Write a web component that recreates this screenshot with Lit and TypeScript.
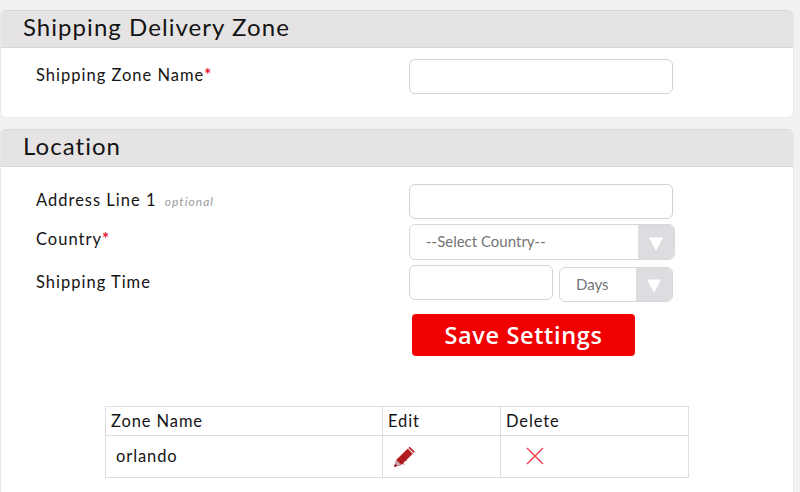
import { LitElement, html, css } from "lit";
import { customElement } from "lit/decorators.js";

@customElement("app-root")
export class AppRoot extends LitElement {
  static styles = css`
    :host {
      display: block;
      height: 492px;
      overflow: hidden;
      background: #f1f1f1;
      font-family: "Lato", "Open Sans", sans-serif;
      color: #141414;
    }
    .page { padding: 10px 6px 0 0; display: flex; flex-direction: column; gap: 11px; }
    .card {
      background: #fff;
      border: 1px solid #e9e9e9;
      border-left-width: 1px;
      border-radius: 6px;
    }
    .card.first { height: 106px; }
    .card.second { height: 400px; border-bottom: 0; border-radius: 6px 6px 0 0; }
    .head {
      height: 36px;
      box-sizing: content-box;
      background: #e5e3e4;
      border-top: 1px solid #d9d8d8;
      margin-top: -1px;
      border-bottom: 1px solid #d6d6d6;
      border-radius: 6px 6px 0 0;
      padding-left: 22px;
      font-size: 24px;
      line-height: 32px;
      letter-spacing: 1.05px;
    }
    .row {
      display: grid;
      grid-template-columns: 373px auto;
      padding-left: 35px;
      font-size: 16.5px;
      letter-spacing: 1px;
    }
    .first .row { margin-top: 11px; }
    .label { line-height: 32px; }
    .req { color: #e8112d; font-weight: 700; }
    .opt { color: #9a9a9a; font-size: 12px; font-style: italic; margin-left: 3px; letter-spacing: 1.05px; }
    input {
      display: block;
      box-sizing: border-box;
      width: 264px;
      height: 35px;
      border: 1px solid #d2d2d2;
      border-radius: 6px;
      background: #fff;
      padding: 0;
      margin: 0;
    }
    .addr { margin-top: 17px; }
    .country { margin-top: 5px; }
    .country .label { line-height: 30px; }
    .time { margin-top: 5px; }
    .time .label { line-height: 35px; }
    .select {
      box-sizing: border-box;
      display: flex;
      justify-content: space-between;
      border: 1px solid #d8d8d8;
      border-radius: 6px;
      background: #fff;
      overflow: hidden;
      font-size: 15px;
      letter-spacing: 0;
      color: #757575;
      font-family: "Lato", sans-serif;
    }
    .select span { align-self: center; margin-top: -2px; }
    .arrow {
      width: 36px;
      background: #dcdde0;
      display: flex;
      align-items: center;
      justify-content: center;
      padding-top: 3px;
      box-sizing: border-box;
    }
    .select.c { width: 266px; height: 36px; }
    .select.c span { padding-left: 16px; }
    .times { display: flex; align-items: flex-start; gap: 6px; }
    .times input { width: 144px; }
    .select.d { width: 114px; height: 35px; margin-top: 2px; }
    .select.d span { padding-left: 16px; }
    .actions { padding-left: 411px; margin-top: 12px; }
    button {
      display: block;
      width: 223px;
      height: 42px;
      background: #f00000;
      color: #fff;
      border: 0;
      border-radius: 4px;
      font-family: "Open Sans", sans-serif;
      font-weight: 600;
      font-size: 23.5px;
      letter-spacing: 0.65px;
      padding: 0;
    }
    table {
      border-collapse: collapse;
      margin: 50px 0 0 104px;
      width: 584px;
      table-layout: fixed;
      font-size: 16.5px;
      letter-spacing: 0.9px;
    }
    td, th {
      border: 1px solid #dedede;
      font-weight: 400;
      text-align: left;
      padding: 0 0 0 5px;
    }
    th { height: 28px; }
    td { height: 39px; }
    td.name { padding-left: 10px; padding-bottom: 2px; }
    svg { display: block; }
    td.edit svg { margin-left: 5px; margin-bottom: 2px; }
    td.del svg { margin-left: 20px; margin-bottom: 1px; }
  `;

  private arrow() {
    return html`<div class="arrow">
      <svg width="16" height="16" viewBox="0 0 16 16"><path d="M1 1.5H15L8 15Z" fill="#fff" /></svg>
    </div>`;
  }

  render() {
    return html`
      <div class="page">
        <section class="card first">
          <div class="head">Shipping Delivery Zone</div>
          <div class="row">
            <div class="label">Shipping Zone Name<span class="req">*</span></div>
            <input type="text" />
          </div>
        </section>
        <section class="card second">
          <div class="head">Location</div>
          <div class="row addr">
            <div class="label">Address Line 1 <span class="opt">optional</span></div>
            <input type="text" />
          </div>
          <div class="row country">
            <div class="label">Country<span class="req">*</span></div>
            <div class="select c"><span>--Select Country--</span>${this.arrow()}</div>
          </div>
          <div class="row time">
            <div class="label">Shipping Time</div>
            <div class="times">
              <input type="text" />
              <div class="select d"><span>Days</span>${this.arrow()}</div>
            </div>
          </div>
          <div class="actions"><button>Save Settings</button></div>
          <table>
            <colgroup><col style="width:277px" /><col style="width:118px" /><col /></colgroup>
            <tr><th>Zone Name</th><th>Edit</th><th>Delete</th></tr>
            <tr>
              <td class="name">orlando</td>
              <td class="edit">
                <svg width="24" height="24" viewBox="0 0 22 22">
                  <path d="M1 21L3 14.5L15.3 2.6L20 7.2L7.6 19.2Z" fill="#b51d22" />
                  <path d="M14 4L18.6 8.6" stroke="#fff" stroke-width="1.1" />
                  <path d="M5 13.8L10.5 19M8 11L12.5 15.5" stroke="#8f1418" stroke-width="0.8" />
                  <path d="M1 21L3 14.5L7.5 19Z" fill="#c9a5a5" />
                  <path d="M1 21L1.9 18L4 20Z" fill="#8a1a1d" />
                </svg>
              </td>
              <td class="del">
                <svg width="18" height="18" viewBox="0 0 18 18">
                  <path d="M1 1L17 17M17 1L1 17" stroke="#f0454d" stroke-width="1.5" fill="none" />
                </svg>
              </td>
            </tr>
          </table>
        </section>
      </div>
    `;
  }
}
